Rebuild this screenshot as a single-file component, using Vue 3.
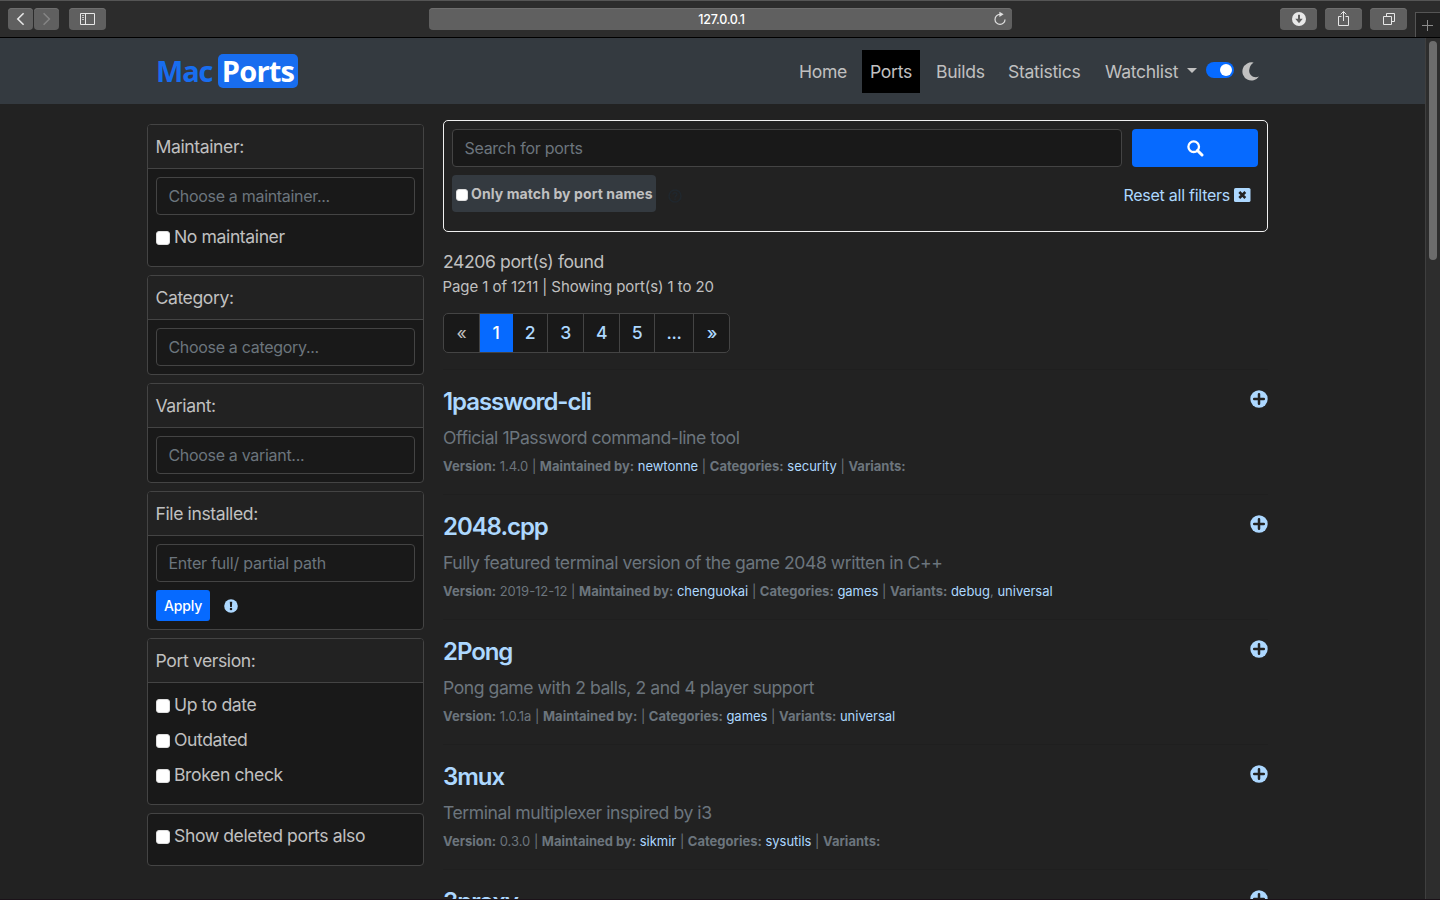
<script setup>
const nav = [
  { label: 'Home', cls: 'n-home' },
  { label: 'Ports', cls: 'n-ports active' },
  { label: 'Builds', cls: 'n-builds' },
  { label: 'Statistics', cls: 'n-stats' },
]
const selects = [
  { title: 'Maintainer:', hint: 'Choose a maintainer...', check: 'No maintainer' },
  { title: 'Category:', hint: 'Choose a category...' },
  { title: 'Variant:', hint: 'Choose a variant...' },
]
const versions = ['Up to date', 'Outdated', 'Broken check']
const pages = [
  { t: '«', w: 36, off: true },
  { t: '1', w: 33, on: true },
  { t: '2', w: 35 },
  { t: '3', w: 36 },
  { t: '4', w: 36 },
  { t: '5', w: 35 },
  { t: '...', w: 39 },
  { t: '»', w: 36 },
]
const ports = [
  { name: '1password-cli', desc: 'Official 1Password command-line tool', version: '1.4.0', by: 'newtonne', cat: 'security', variants: [] },
  { name: '2048.cpp', desc: 'Fully featured terminal version of the game 2048 written in C++', version: '2019-12-12', by: 'chenguokai', cat: 'games', variants: ['debug', 'universal'] },
  { name: '2Pong', desc: 'Pong game with 2 balls, 2 and 4 player support', version: '1.0.1a', by: '', cat: 'games', variants: ['universal'] },
  { name: '3mux', desc: 'Terminal multiplexer inspired by i3', version: '0.3.0', by: 'sikmir', cat: 'sysutils', variants: [] },
  { name: '3proxy' },
]
</script>

<template>
  <div class="window">
    <div class="toolbar">
      <div class="tools left">
        <span class="tb small"><svg width="25" height="22" viewBox="0 0 25 22"><path d="M15.6 5.2 9.8 11l5.8 5.8" fill="none" stroke="#e6e6e6" stroke-width="1.6" /></svg></span>
        <span class="tb small"><svg width="25" height="22" viewBox="0 0 25 22"><path d="M9.6 5.2 15.4 11l-5.8 5.8" fill="none" stroke="#858585" stroke-width="1.5" /></svg></span>
        <span class="tb side"><svg width="37" height="22" viewBox="0 0 37 22"><path d="M11.5 5.5h14v11h-14zM16.5 5.5v11" fill="none" stroke="#e6e6e6" /><path d="M13 7.5h2M13 9.5h2M13 11.5h2" stroke="#c4c4c4" /></svg></span>
      </div>
      <div class="address">
        <span>127.0.0.1</span>
        <svg class="reload" width="14" height="16" viewBox="0 0 14 16"><path d="M7 3.4a5 5 0 1 0 5 5" fill="none" stroke="#e0e0e0" stroke-width="1.2" /><path d="M6.4.7 10.6 3.3 6.4 6z" fill="#e0e0e0" /></svg>
      </div>
      <div class="tools right">
        <span class="tb"><svg width="37" height="22" viewBox="0 0 37 22"><circle cx="19" cy="11" r="7" fill="#e8e8e8" /><path d="M19 6.7v5" stroke="#606060" stroke-width="2" /><path d="M15.3 10.8h7.4L19 15.2z" fill="#606060" /></svg></span>
        <span class="tb"><svg width="37" height="22" viewBox="0 0 37 22"><path d="M16.5 8.5h-3v9h10v-9h-3M18.5 13V3.6M15.6 6.4l2.9-2.9 2.9 2.9" fill="none" stroke="#e6e6e6" /></svg></span>
        <span class="tb"><svg width="37" height="22" viewBox="0 0 37 22"><path d="M13.5 8.500h8v8h-8zM16.500 8V5.500h8v8H22" fill="none" stroke="#e6e6e6" /></svg></span>
      </div>
      <div class="newtab"><svg width="24" height="25" viewBox="0 0 24 25"><path d="M6 12.5h11M11.5 7v11" stroke="#8b8b8b" /></svg></div>
    </div>

    <div class="viewport">
      <div class="page">
        <nav class="navbar">
          <div class="logo"><span class="mac">Mac</span><span class="badge">Ports</span></div>
          <div class="links">
            <a v-for="n in nav" :key="n.label" :class="n.cls">{{ n.label }}</a>
            <a class="n-watch">Watchlist</a>
            <i class="caret"></i>
            <span class="switch"><i></i></span>
            <svg class="moon" width="18" height="19" viewBox="0 0 18 19"><path d="M11.6.6A9.1 9.1 0 1 0 17 14.6C11 17 6 12.500 7.400 7 8 4 9.600 2 11.600.6z" fill="#c0c0c0" /></svg>
          </div>
        </nav>

        <div class="content">
          <aside>
            <section v-for="s in selects" :key="s.title" class="card">
              <header>{{ s.title }}</header>
              <div class="body">
                <div class="field">{{ s.hint }}</div>
                <label v-if="s.check" class="check after"><i class="box"></i>{{ s.check }}</label>
              </div>
            </section>
            <section class="card">
              <header>File installed:</header>
              <div class="body">
                <div class="field path">Enter full/ partial path</div>
                <div class="apply-row">
                  <span class="apply">Apply</span>
                  <svg width="14" height="14" viewBox="0 0 14 14"><circle cx="7" cy="7" r="6.8" fill="#add8ff" /><path d="M5.8 2.800h2.400L7.900 7.900H6.100z" fill="#191919" /><circle cx="7" cy="10" r="1.250" fill="#191919" /></svg>
                </div>
              </div>
            </section>
            <section class="card">
              <header>Port version:</header>
              <div class="body">
                <label v-for="v in versions" :key="v" class="check"><i class="box"></i>{{ v }}</label>
              </div>
            </section>
            <section class="card">
              <div class="body"><label class="check"><i class="box"></i>Show deleted ports also</label></div>
            </section>
          </aside>

          <main>
            <div class="search">
              <div class="row">
                <div class="field query">Search for ports</div>
                <div class="go"><svg width="17" height="17" viewBox="0 0 17 17"><circle cx="6.700" cy="6.700" r="5.300" fill="none" stroke="#fff" stroke-width="2.300" /><path d="M10.500 10.500 15 15" stroke="#fff" stroke-width="3" stroke-linecap="round" /></svg></div>
              </div>
              <div class="row second">
                <label class="only"><i class="box"></i>Only match by port names</label>
                <svg class="help" width="14" height="14" viewBox="0 0 14 14"><circle cx="7" cy="7" r="6" fill="none" stroke="#20272d" stroke-width="1.600" /><path d="M5 5.500c0-2.600 4-2.300 4 0C9 7 7 6.800 7 8.400M7 9.500v1.500" fill="none" stroke="#20272d" stroke-width="1.500" /></svg>
                <span class="reset">Reset all filters</span>
                <svg class="clear" width="17" height="14" viewBox="0 0 17 14"><rect width="16.500" height="14" rx="1.600" fill="#add8ff" /><path d="M5.300 4l6 6M11.300 4l-6 6" stroke="#222" stroke-width="2.600" /></svg>
              </div>
            </div>
            <p class="found">24206 port(s) found</p>
            <p class="range">Page 1 of 1211 | Showing port(s) 1 to 20</p>
            <div class="pager">
              <span v-for="p in pages" :key="p.t" :class="{ on: p.on, off: p.off }" :style="{ width: p.w + 'px' }">{{ p.t }}</span>
            </div>
            <article v-for="p in ports" :key="p.name">
              <div class="title">
                <h4>{{ p.name }}</h4>
                <svg width="18" height="18" viewBox="0 0 18 18"><circle cx="9" cy="9" r="8.700" fill="#add8ff" /><path d="M9 4.200v9.600M4.200 9h9.600" stroke="#222" stroke-width="2.500" stroke-linecap="round" /></svg>
              </div>
              <template v-if="p.desc">
                <div class="desc">{{ p.desc }}</div>
                <div class="meta"><b>Version:</b> {{ p.version }} | <b>Maintained by:</b> <a v-if="p.by">{{ p.by }}</a> | <b>Categories:</b> <a>{{ p.cat }}</a> | <b>Variants:</b> <template v-for="(v, k) in p.variants" :key="v"><template v-if="k">, </template><a>{{ v }}</a></template></div>
              </template>
            </article>
          </main>
        </div>
      </div>
      <div class="scroll"><i></i></div>
      <div class="edge"></div>
    </div>
  </div>
</template>

<style>
body { background: #222; overflow: hidden; }
</style>

<style scoped>
* { box-sizing: border-box; }
svg { display: block; flex: none; }
.window { width: 1440px; height: 900px; overflow: hidden; background: #222; color: #c0c0c0; font-family: Inter, "Liberation Sans", sans-serif; font-size: 17.6px; letter-spacing: -0.023em; white-space: nowrap; display: flex; flex-direction: column; }
.toolbar { height: 38px; flex: none; position: relative; background: #2c2c2c; border-top: 1px solid #555; border-bottom: 1px solid #000; display: flex; padding: 7px 33px 0 8px; }
.tools { display: flex; }
.left { gap: 1px; width: 421px; }
.right { gap: 8px; margin-left: auto; }
.tb { width: 37px; height: 22px; border-radius: 4px; background: #606060; box-shadow: inset 0 1px #6e6e6e; }
.small { width: 25px; }
.side { margin-left: 9px; }
.address { width: 583px; height: 22px; border-radius: 4px; background: #606060; box-shadow: inset 0 1px #6e6e6e; color: #fff; font-size: 12.5px; font-weight: 500; line-height: 23px; text-align: center; position: relative; letter-spacing: -0.02em; padding-left: 2px; }
.reload { position: absolute; right: 5px; top: 3px; }
.newtab { position: absolute; right: 0; top: 11px; width: 25px; height: 25px; background: #202020; border-left: 1px solid #555; border-top: 1px solid #555; }
.viewport { flex: 1; min-height: 0; display: flex; position: relative; }
.page { width: 1425px; height: 862px; overflow: hidden; }
.scroll { width: 15px; height: 862px; background: #2d2d2d; border-left: 1px solid #3f3f3f; padding: 3px 0 0 3px; }
.scroll i { display: block; width: 8px; height: 219px; border-radius: 4px; background: #6c6c6c; }
.edge { position: absolute; left: 0; right: 0; bottom: 0; height: 1px; background: #1b1219; }
.navbar { height: 66px; background: #343a40; display: flex; justify-content: space-between; padding: 0 166px 0 157px; }
.logo { display: flex; align-items: flex-start; padding-top: 16px; font-family: "Open Sans", sans-serif; font-weight: 700; font-size: 29px; line-height: 33px; color: #186def; }
.mac { width: 61px; letter-spacing: -1.2px; margin-left: -1px; margin-right: 1px; }
.badge { width: 80px; height: 34px; border-radius: 5px; background: #186def; color: #fff; text-align: center; letter-spacing: -0.8px; }
.links { display: flex; align-items: flex-start; padding-top: 12px; letter-spacing: -0.018em; }
.links a { height: 43px; line-height: 43px; padding: 0 8px; margin-right: 8px; }
.n-home { width: 63px; }
.n-ports { width: 58px; }
.n-builds { width: 64px; }
.n-stats { width: 89px; }
.links .n-watch { width: 81px; padding-right: 0; margin-right: 9px; }
.active { background: #000; }
.caret { border: 5px solid transparent; border-top-color: #c0c0c0; border-bottom: 0; margin-top: 18px; }
.switch { width: 28px; height: 16px; border-radius: 8px; background: #066aff; margin: 12px 8px 0 9px; padding: 2px; }
.switch i { display: block; width: 12px; height: 12px; border-radius: 50%; background: #fff; margin-left: 12px; }
.moon { margin: 12px -1px 0 0; }
.content { display: flex; padding-left: 147px; }
aside { width: 277px; padding-top: 20px; flex: none; }
.card { border: 1px solid #444; border-radius: 4px; background: #191919; margin-bottom: 8px; overflow: hidden; }
.card header { height: 44px; padding-left: 7.500px; line-height: 44px; background: #222; border-bottom: 1px solid #444; }
.body { padding: 8px; }
.field { height: 38px; border: 1px solid #444; border-radius: 4px; background: #191919; padding-left: 11.400px; line-height: 37px; font-size: 16px; color: #6c757d; letter-spacing: -0.019em; }
.path { letter-spacing: -0.013em; }
.check { display: flex; align-items: center; height: 27px; margin-bottom: 8px; }
.check.after { margin: 8px 0; }
.box { width: 14px; height: 14px; border-radius: 3px; background: #fff; border: 1px solid #ddd; margin: 3px 4px 0 0; flex: none; }
.apply-row { display: flex; align-items: center; margin-top: 8px; gap: 14px; }
.apply { width: 54px; height: 31px; border-radius: 3px; background: #066aff; color: #fff; font-size: 14px; font-weight: 500; line-height: 32px; text-align: center; letter-spacing: -0.01em; }
main { width: 825px; margin-left: 19px; padding-top: 16px; }
.search { height: 112px; border: 1px solid #f0f0f0; border-radius: 5px; padding: 8px; }
.row { display: flex; }
.query { width: 670px; letter-spacing: -0.016em; }
.go { width: 126px; height: 38px; margin-left: 10px; border-radius: 4px; background: #066aff; display: flex; align-items: center; justify-content: center; }
.second { margin-top: 8px; align-items: center; height: 37px; padding-right: 8px; }
.only { width: 204px; height: 37px; border-radius: 4px; background: #343a40; display: flex; align-items: center; padding-left: 4px; font-size: 14px; font-weight: 700; letter-spacing: 0.007em; }
.only .box { width: 12px; height: 12px; margin: 3px 3px 0 0; }
.help { margin: 4px 0 0 12px; }
.reset { margin-left: auto; margin-right: 4px; font-size: 16px; color: #add8ff; padding-top: 3px; letter-spacing: -0.016em; }
.clear { margin-top: 3px; }
p { margin: 0; }
.found { margin-top: 16px; height: 27px; line-height: 27px; }
.range { height: 24px; line-height: 24px; font-size: 15px; letter-spacing: -0.005em; margin-left: -0.500px; }
.pager { display: flex; margin-top: 14px; width: 287px; height: 40px; border: 1px solid #444; border-radius: 5px; overflow: hidden; background: #191919; margin-bottom: 16px; }
.pager span { flex: none; border-right: 1px solid #444; line-height: 38px; text-align: center; color: #add8ff; font-weight: 500; }
.pager span:last-child { border-right: 0; }
.pager .off { color: #c0c0c0; font-weight: 400; }
.pager .on { background: #066aff; color: #fff; border-color: #066aff; }
article { height: 125px; border-top: 1px solid #1f1f1f; }
.title { display: flex; justify-content: space-between; padding-top: 17px; height: 49px; }
.title svg { margin: 3px 0.500px 0 0; }
h4 { margin: 0; font-size: 24px; font-weight: 600; line-height: 29px; color: #add8ff; letter-spacing: -0.044em; }
.desc { height: 36px; line-height: 38px; color: #6c757d; letter-spacing: -0.0255em; }
.meta { height: 22px; line-height: 22px; font-size: 13px; color: #6c757d; letter-spacing: -0.001em; }
.meta a { color: #add8ff; }
</style>
